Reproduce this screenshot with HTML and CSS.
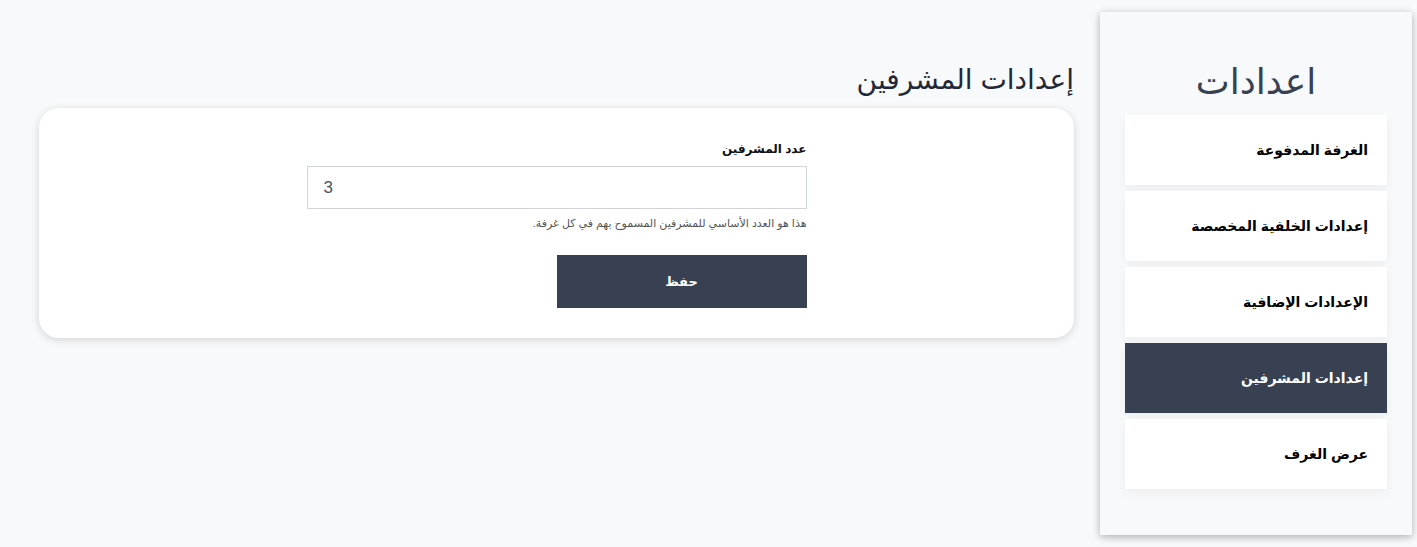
FILE: index.html
```html
<!DOCTYPE html>
<html lang="ar" dir="rtl">
<head>
<meta charset="utf-8">
<title>إعدادات المشرفين</title>
<link rel="stylesheet" href="styles.css">
</head>
<body>
<div class="layout">
  <aside class="sidebar">
    <h1 class="sidebar-title">اعدادات</h1>
    <nav class="menu">
      <a class="menu-item" href="#">الغرفة المدفوعة</a>
      <a class="menu-item" href="#">إعدادات الخلفية المخصصة</a>
      <a class="menu-item" href="#">الإعدادات الإضافية</a>
      <a class="menu-item active" href="#">إعدادات المشرفين</a>
      <a class="menu-item" href="#">عرض الغرف</a>
    </nav>
  </aside>
  <main class="main">
    <h2 class="page-title">إعدادات المشرفين</h2>
    <section class="card">
      <form class="form">
        <label class="label" for="count">عدد المشرفين</label>
        <input class="input" id="count" type="text" value="3" dir="ltr">
        <p class="help">هذا هو العدد الأساسي للمشرفين المسموح بهم في كل غرفة.</p>
        <div class="actions">
          <button class="btn" type="button">حفظ</button>
        </div>
      </form>
    </section>
  </main>
</div>
</body>
</html>
```
FILE: styles.css
```css
html, body {
  margin: 0;
  padding: 0;
}
body {
  background: #f8f9fb;
  font-family: "Liberation Sans", "DejaVu Sans", Arial, sans-serif;
  color: #111;
  height: 547px;
  overflow: hidden;
}
.layout {
  display: flex;
  flex-direction: row;
  align-items: flex-start;
}
.sidebar {
  width: 312px;
  height: 523px;
  box-sizing: border-box;
  margin: 12px 5px 0 0;
  background: #f8f9fb;
  box-shadow: 0 2px 8px rgba(0, 0, 0, 0.3);
  padding: 50px 25px 0 25px;
  flex-shrink: 0;
}
.sidebar-title {
  margin: 0 0 13px 0;
  text-align: center;
  font-weight: normal;
  font-size: 36px;
  line-height: 40px;
  color: #374151;
}
.menu {
  display: flex;
  flex-direction: column;
  gap: 6px;
}
.menu-item {
  display: flex;
  align-items: center;
  height: 70px;
  padding: 0 19px;
  background: #fff;
  color: #000;
  font-weight: bold;
  font-size: 14px;
  text-decoration: none;
  box-shadow: 0 4px 10px rgba(0, 0, 0, 0.05);
}
.menu-item.active {
  background: #374151;
  color: #fff;
}
.main {
  flex: 1;
  padding: 0 26px 0 39px;
}
.page-title {
  margin: 62px 0 11px 0;
  font-weight: normal;
  font-size: 28px;
  line-height: 35px;
  color: #1f2937;
}
.card {
  background: #fff;
  border-radius: 20px;
  box-shadow: 0 2px 8px rgba(0, 0, 0, 0.15);
  padding: 33px 0 30px 0;
  display: flex;
  justify-content: center;
}
.form {
  width: 500px;
  display: flex;
  flex-direction: column;
}
.label {
  font-weight: bold;
  font-size: 12px;
  line-height: 16px;
  margin-bottom: 9px;
  color: #111;
}
.input {
  box-sizing: border-box;
  height: 43px;
  border: 1px solid #d1d5db;
  padding: 0 16px;
  font-family: "Liberation Sans", Arial, sans-serif;
  font-size: 17px;
  color: #4b5563;
  background: #fff;
  outline: none;
  text-align: left;
}
.help {
  margin: 7px 0 0 0;
  font-size: 11px;
  line-height: 14px;
  color: #555;
}
.actions {
  display: flex;
  margin-top: 25px;
}
.btn {
  width: 250px;
  height: 53px;
  border: 0;
  background: #374151;
  color: #fff;
  font-family: "Liberation Sans", "DejaVu Sans", Arial, sans-serif;
  font-weight: bold;
  font-size: 13px;
  cursor: pointer;
}
```
